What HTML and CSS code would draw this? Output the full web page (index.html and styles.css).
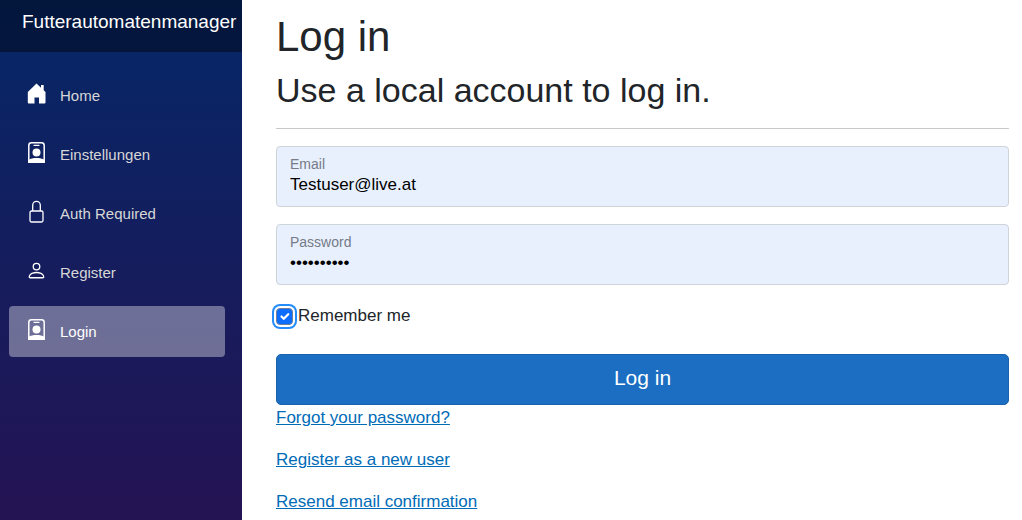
FILE: index.html
```html
<!DOCTYPE html>
<html lang="en">
<head>
<meta charset="utf-8">
<meta name="viewport" content="width=device-width, initial-scale=1">
<title>Log in</title>
<link rel="stylesheet" href="styles.css">
</head>
<body>
<svg class="sprite" aria-hidden="true">
  <symbol id="badge" viewBox="0 0 21 21">
    <path fill="none" stroke="#fff" stroke-width="1.500" d="M5.500.8h10a2.700 2.700 0 0 1 2.700 2.700v16.700H2.800V3.500A2.700 2.700 0 0 1 5.500.8z"/>
    <path d="M8 2.700h5a.6.6 0 0 1 0 1.300H8a.6.6 0 0 1 0-1.300zM2.500 18c2-1.400 4.800-2 8-2s6 .6 8 2v1.500a1.500 1.500 0 0 1-1.500 1.500H4a1.500 1.500 0 0 1-1.500-1.500z"/>
    <circle cx="10.500" cy="10.500" r="4"/>
  </symbol>
</svg>
<div class="page">
  <aside class="sidebar">
    <header class="brand-bar"><a class="brand" href="#">Futterautomatenmanager</a></header>
    <nav class="menu">
      <a class="item" href="#"><svg class="icon" viewBox="0 0 21 21"><path d="M10.500.6 15 4.800V2h2.700v5.200l1.800 1.800v10.500a1 1 0 0 1-1 1h-5.500v-6H8.500v6H2.800a1 1 0 0 1-1-1V9z"/></svg>Home</a>
      <a class="item" href="#"><svg class="icon"><use href="#badge"/></svg>Einstellungen</a>
      <a class="item" href="#"><svg class="icon lock" viewBox="0 0 21 21"><path d="M6.700 10V4.200a3.800 3.800 0 0 1 7.600 0V10M5.500 10h10a1.500 1.500 0 0 1 1.500 1.500v8a1.500 1.500 0 0 1-1.500 1.500h-10A1.500 1.500 0 0 1 4 19.500v-8A1.500 1.500 0 0 1 5.500 10z"/></svg>Auth Required</a>
      <a class="item" href="#"><svg class="icon" viewBox="0 0 16 16"><path d="M8 8a3 3 0 1 0 0-6 3 3 0 0 0 0 6zm2-3a2 2 0 1 1-4 0 2 2 0 0 1 4 0zm4 8c0 1-1 1-1 1H3s-1 0-1-1 1-4 6-4 6 3 6 4zm-1-.004c-.001-.246-.154-.986-.832-1.664C11.516 10.680 10.289 10 8 10c-2.290 0-3.516.680-4.168 1.332-.678.678-.830 1.418-.832 1.664h10z"/></svg>Register</a>
      <a class="item active" href="#" aria-current="page"><svg class="icon"><use href="#badge"/></svg>Login</a>
    </nav>
  </aside>
  <main class="content">
    <h1 class="title">Log in</h1>
    <form class="login" action="#">
      <h2 class="subtitle">Use a local account to log in.</h2>
      <hr class="rule">
      <div class="field">
        <label class="caption" for="email">Email</label>
        <input class="control" id="email" type="email" value="Testuser@live.at">
      </div>
      <div class="field">
        <label class="caption" for="password">Password</label>
        <input class="control" id="password" type="password" value="Passwort12">
      </div>
      <div class="remember">
        <input class="check" id="remember" type="checkbox" checked>
        <label for="remember">Remember me</label>
      </div>
      <button class="submit" type="submit">Log in</button>
      <div class="links">
        <a class="link" href="#">Forgot your password?</a>
        <a class="link" href="#">Register as a new user</a>
        <a class="link" href="#">Resend email confirmation</a>
      </div>
    </form>
  </main>
</div>
</body>
</html>
```
FILE: styles.css
```css
* { box-sizing: border-box; }

body {
  margin: 0;
  font: 17px/26px "Liberation Sans", Arial, sans-serif;
  color: #212529;
  background: #fff;
}

.sprite { display: none; }

.page { display: flex; min-height: 100vh; }

.sidebar {
  flex: 0 0 242px;
  background: linear-gradient(180deg, #052767 0, #3a0647 872px);
}

.brand-bar {
  height: 52px;
  padding: 9px 0 0 22px;
  background: rgba(0, 0, 0, 0.4);
}

.brand { color: #fff; font-size: 19px; text-decoration: none; }

.menu {
  display: flex;
  flex-direction: column;
  gap: 8px;
  padding: 18px 17px 17px 9px;
}

.item {
  display: flex;
  align-items: center;
  height: 51px;
  padding-left: 17px;
  border-radius: 4px;
  color: #d7d7d7;
  font-size: 15px;
  text-decoration: none;
}

.item.active { background: rgba(255, 255, 255, 0.37); color: #fff; }

.icon {
  width: 21px;
  height: 21px;
  margin: 0 13px 4px 0;
  fill: #fff;
}

.lock { fill: none; stroke: #fff; stroke-width: 1.3; overflow: visible; }

.content { flex: 1; min-width: 0; padding: 11px 13px 0 34px; }

.title, .subtitle { margin: 0; font-weight: 400; }

.title { margin-bottom: 8px; font-size: 42px; line-height: 51px; }

.subtitle { font-size: 34px; line-height: 41px; }

.rule { height: 1px; margin: 17px 0; border: 0; background: #c8c9ca; }

.field {
  height: 61px;
  margin-bottom: 17px;
  position: relative;
}

.caption {
  position: absolute;
  top: 8px;
  left: 14px;
  color: #757b87;
  font-size: 14px;
  line-height: 20px;
}

.control {
  display: block;
  width: 100%;
  height: 100%;
  padding: 26px 13px 10px;
  border: 1px solid #ced4da;
  border-radius: 4px;
  background: #e8f0fe;
  color: #000;
  font: inherit;
}

.remember {
  display: flex;
  align-items: center;
  margin-bottom: 24px;
  line-height: 28px;
}

.check {
  appearance: none;
  width: 17px;
  height: 17px;
  margin: 0 5px 0 0;
  border: 1px solid #6f7f96;
  border-radius: 4px;
  background: #0d6efd url("data:image/svg+xml,%3Csvg xmlns='http://www.w3.org/2000/svg' viewBox='0 0 20 20'%3E%3Cpath fill='none' stroke='%23fff' stroke-linecap='round' stroke-linejoin='round' stroke-width='3' d='m6 10 3 3 6-6'/%3E%3C/svg%3E") center / contain no-repeat;
  box-shadow: 0 0 0 2px #fff, 0 0 0 4px #258cfb;
}

.submit {
  display: block;
  width: 100%;
  height: 51px;
  padding: 0 17px 3px;
  border: 1px solid #1861ac;
  border-radius: 5px;
  background: #1b6ec2;
  color: #fff;
  font: inherit;
  font-size: 21px;
}

.links { display: flex; flex-direction: column; align-items: flex-start; gap: 16px; }

.link { color: #006bb7; }
```
